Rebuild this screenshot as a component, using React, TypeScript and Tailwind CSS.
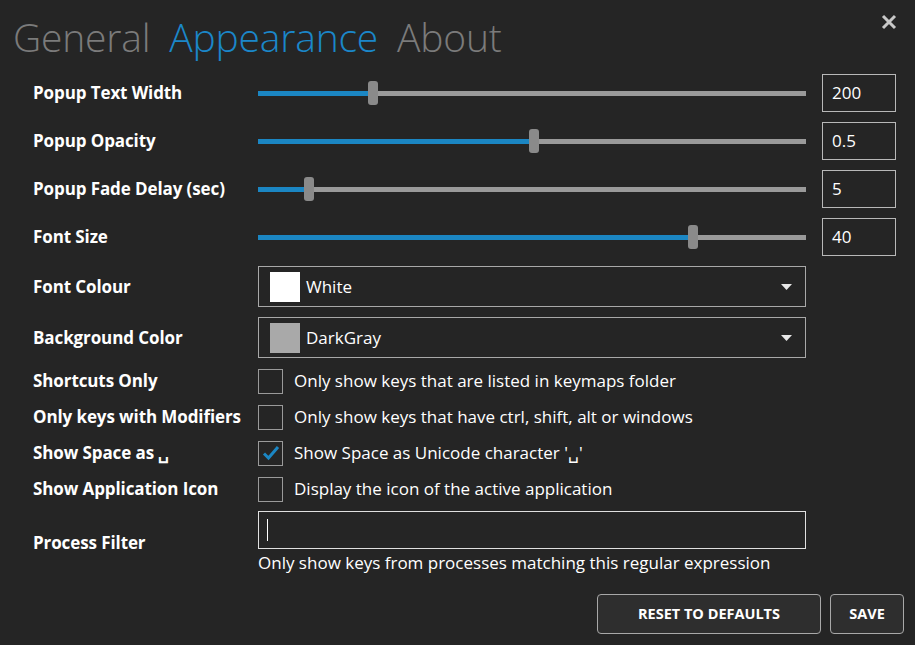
import React from "react";

const SLIDERS = [
  { label: "Popup Text Width", value: "200", pct: 0.21 },
  { label: "Popup Opacity", value: "0.5", pct: 0.503 },
  { label: "Popup Fade Delay (sec)", value: "5", pct: 0.093 },
  { label: "Font Size", value: "40", pct: 0.794 },
];

const COLOURS = [
  { label: "Font Colour", name: "White", swatch: "bg-white" },
  { label: "Background Color", name: "DarkGray", swatch: "bg-[#a9a9a9]" },
];

const CHECKS = [
  { label: "Shortcuts Only", text: "Only show keys that are listed in keymaps folder", on: false },
  { label: "Only keys with Modifiers", text: "Only show keys that have ctrl, shift, alt or windows", on: false },
  { label: "Show Space as \u2423", text: "Show Space as Unicode character '\u2423'", on: true },
  { label: "Show Application Icon", text: "Display the icon of the active application", on: false },
];

function Slider({ pct }: { pct: number }) {
  return (
    <div className="flex-1 flex items-center h-6">
      <div className="h-[5px] bg-[#1b86c3]" style={{ width: `calc(${pct * 100}% - 5px)` }} />
      <div className="w-[10px] h-6 rounded-[3px] bg-[#8a8a8a] shrink-0" />
      <div className="flex-1 h-[5px] bg-[#9a9a9a]" />
    </div>
  );
}

export default function App() {
  return (
    <div
      className="w-[915px] h-[645px] bg-[#252525] text-white relative overflow-hidden"
      style={{ fontFamily: "'Open Sans', 'Noto Sans', sans-serif" }}
    >
      <button className="absolute left-[881px] top-[14px] text-[#c8c8c8]">
        <svg width="16" height="16" viewBox="0 0 16 16">
          <path d="M2 2 L14 14 M14 2 L2 14" stroke="currentColor" strokeWidth="3" />
        </svg>
      </button>

      {/* Tabs */}
      <div className="flex gap-[19px] pl-[13px] pt-[12px] h-[69px] text-[39px] font-light leading-[50px] tracking-[-0.2px]">
        <span className="text-[#7b7b7b]">General</span>
        <span className="text-[#1b87c9]">Appearance</span>
        <span className="text-[#7b7b7b]">About</span>
      </div>

      <div className="pl-[33px] pr-[19px] text-[17px]">
        {SLIDERS.map((s) => (
          <div key={s.label} className="flex items-center h-[48px]">
            <div className="w-[225px] font-bold tracking-[-0.1px]">{s.label}</div>
            <Slider pct={s.pct} />
            <div className="ml-[16px] w-[74px] h-[38px] border border-[#b8b8b8] flex items-center px-[9px]">
              {s.value}
            </div>
          </div>
        ))}

        {COLOURS.map((c) => (
          <div key={c.label} className="flex items-center h-[51px]">
            <div className="w-[225px] font-bold tracking-[-0.1px]">{c.label}</div>
            <div className="w-[548px] h-[41px] border border-[#a8a8a8] flex items-center pl-[11px] pr-[13px]">
              <div className={`w-[30px] h-[30px] ${c.swatch}`} />
              <span className="ml-[6px] flex-1">{c.name}</span>
              <svg width="11" height="6" viewBox="0 0 11 6">
                <path d="M0 0 H11 L5.5 6 Z" fill="#e8e8e8" />
              </svg>
            </div>
          </div>
        ))}

        {CHECKS.map((c) => (
          <div key={c.label} className="flex items-center h-[36px]">
            <div className="w-[225px] font-bold tracking-[-0.1px]">{c.label}</div>
            <div className="w-[25px] h-[25px] border border-[#9a9a9a] flex items-center justify-center">
              {c.on && (
                <svg width="18" height="16" viewBox="0 0 18 16">
                  <path d="M2 8.5 L6.5 13 L16 2" stroke="#1b86c3" strokeWidth="3" fill="none" />
                </svg>
              )}
            </div>
            <span className="ml-[11px]">{c.text}</span>
          </div>
        ))}

        <div className="flex items-center mt-[4px]">
          <div className="w-[225px] font-bold tracking-[-0.1px]">Process Filter</div>
          <div className="w-[548px]">
            <div className="h-[38px] border border-[#e0e0e0] flex items-center pl-[8px]">
              <div className="w-px h-[22px] bg-white" />
            </div>
            <div className="mt-[2px] leading-[24px]">
              Only show keys from processes matching this regular expression
            </div>
          </div>
        </div>

        <div className="flex justify-end gap-[9px] mt-[19px] mr-[-8px]">
          <button className="w-[224px] h-[40px] rounded-[4px] border border-[#a8a8a8] bg-[#2e2e2e] text-[14.5px] font-bold">
            RESET TO DEFAULTS
          </button>
          <button className="w-[74px] h-[40px] rounded-[4px] border border-[#a8a8a8] bg-[#2e2e2e] text-[14.5px] font-bold">
            SAVE
          </button>
        </div>
      </div>
    </div>
  );
}
